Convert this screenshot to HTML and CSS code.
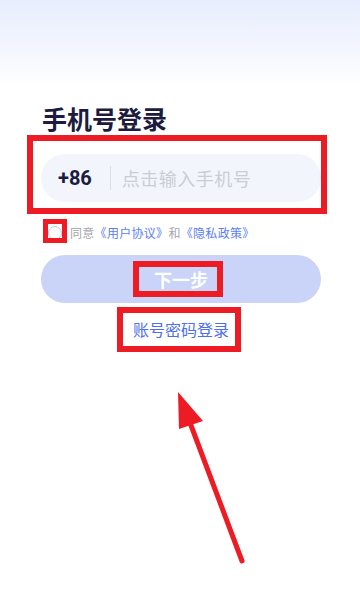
FILE: index.html
```html
<!DOCTYPE html>
<html lang="zh-CN">
<head>
<meta charset="utf-8">
<meta name="viewport" content="width=360, initial-scale=1">
<title>手机号登录</title>
<link rel="stylesheet" href="styles.css">
</head>
<body>
<main class="page">
  <h1 class="title">手机号登录</h1>
  <div class="phone">
    <span class="code">+86</span>
    <span class="divider"></span>
    <span class="placeholder">点击输入手机号</span>
  </div>
  <div class="agree">
    <span class="check"></span>
    <span class="agree-text">同意<a class="link">《用户协议》</a>和<a class="link">《隐私政策》</a></span>
  </div>
  <button class="next">下一步</button>
  <div class="alt"><a class="alt-link">账号密码登录</a></div>

  <div class="mark mark-phone"></div>
  <div class="mark mark-check"></div>
  <div class="mark mark-next"></div>
  <div class="mark mark-alt"></div>
  <svg class="arrow" width="360" height="605" viewBox="0 0 360 605">
    <line x1="242" y1="561" x2="189" y2="420" stroke="#ed1c24" stroke-width="5" stroke-linecap="round"/>
    <polygon points="178,392 203,421 179,429" fill="#ed1c24"/>
  </svg>
</main>
</body>
</html>
```
FILE: styles.css
```css
html, body {
  margin: 0;
  padding: 0;
}
body {
  background: linear-gradient(to bottom, #e7edfd 0px, #f3f6fe 50px, #ffffff 88px);
  background-repeat: no-repeat;
  background-color: #fff;
  font-family: "Noto Sans CJK SC", "Noto Sans", sans-serif;
}
.page {
  position: relative;
  width: 360px;
  height: 605px;
  box-sizing: border-box;
  padding: 0 39px 0 41px;
  display: flex;
  flex-direction: column;
  overflow: hidden;
}
.title {
  margin: 100px 0 0 1px;
  font-size: 25px;
  line-height: 36px;
  font-weight: 700;
  color: #1b1c3e;
}
.phone {
  margin-top: 18px;
  height: 48px;
  border-radius: 24px;
  background: #f3f5fc;
  display: flex;
  align-items: center;
  padding-left: 17px;
}
.code {
  font-family: Roboto, "Noto Sans", sans-serif;
  font-weight: 700;
  font-size: 20px;
  color: #1b1c3e;
  line-height: 24px;
}
.divider {
  width: 1px;
  height: 24px;
  background: #dcdfe8;
  margin-left: 18px;
}
.placeholder {
  margin-left: 11px;
  font-size: 18px;
  letter-spacing: 0.5px;
  color: #cbcdd6;
  line-height: 24px;
}
.agree {
  margin-top: 21px;
  height: 20px;
  display: flex;
  align-items: center;
  padding-left: 7px;
}
.check {
  width: 12px;
  height: 12px;
  border: 1px solid #c5c7cc;
  border-radius: 50%;
  flex: none;
}
.agree-text {
  margin-left: 8px;
  font-size: 12px;
  letter-spacing: 0.3px;
  line-height: 20px;
  color: #a3a5ab;
}
.link {
  color: #5b7ef2;
}
.next {
  margin-top: 12px;
  height: 48px;
  border: none;
  border-radius: 24px;
  background: #c9d4f8;
  color: #ffffff;
  font-family: "Noto Sans CJK SC", sans-serif;
  font-size: 18px;
  font-weight: 700;
  padding: 0;
}
.alt {
  margin-top: 14px;
  text-align: center;
  line-height: 24px;
}
.alt-link {
  font-size: 16px;
  color: #4d6ef0;
}
.mark {
  position: absolute;
  box-sizing: border-box;
  border: 6px solid #ed1c24;
}
.mark-phone {
  left: 27px;
  top: 135px;
  width: 300px;
  height: 79px;
}
.mark-check {
  left: 43px;
  top: 219px;
  width: 24px;
  height: 24px;
  border-width: 5px;
}
.mark-next {
  left: 133px;
  top: 261px;
  width: 90px;
  height: 36px;
}
.mark-alt {
  left: 117px;
  top: 307px;
  width: 124px;
  height: 45px;
}
.arrow {
  position: absolute;
  left: 0;
  top: 0;
  pointer-events: none;
}
```
